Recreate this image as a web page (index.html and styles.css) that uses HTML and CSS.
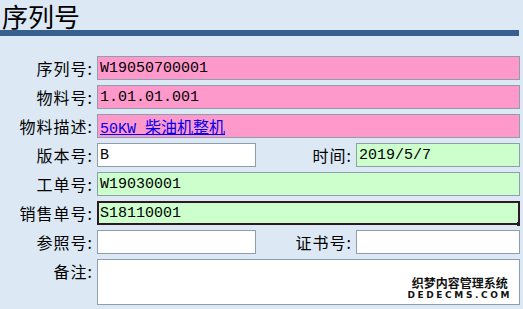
FILE: index.html
```html
<!DOCTYPE html>
<html lang="zh-CN">
<head>
<meta charset="UTF-8">
<title>序列号</title>
<link rel="stylesheet" href="styles.css">
</head>
<body>

<h1 class="title">序列号</h1>

<div class="form">
    <label class="lbl">序列号:</label>
    <div class="field wide pink">W19050700001</div>

    <label class="lbl">物料号:</label>
    <div class="field wide pink">1.01.01.001</div>

    <label class="lbl">物料描述:</label>
    <div class="field wide pink"><a href="#">50KW <span class="cjk">柴油机整机</span></a></div>

    <label class="lbl">版本号:</label>
    <div class="field white">B</div>
    <label class="lbl">时间:</label>
    <div class="field green">2019/5/7</div>

    <label class="lbl">工单号:</label>
    <div class="field wide green">W19030001</div>

    <label class="lbl">销售单号:</label>
    <div class="field wide green focus">S18110001<span class="grip"></span></div>

    <label class="lbl">参照号:</label>
    <div class="field white"></div>
    <label class="lbl">证书号:</label>
    <div class="field white"></div>

    <label class="lbl">备注:</label>
    <div class="field wide white memo">
        <div class="mark">
            <div class="mark-cn">织梦内容管理系统</div>
            <div class="mark-en">DEDECMS.COM</div>
        </div>
    </div>
</div>

</body>
</html>
```

FILE: styles.css
```css
body {
    margin: 0;
    background: #dce9f5;
    font-family: "Noto Sans CJK SC", sans-serif;
    color: #000;
    width: 520px;
}
.title {
    margin: 0;
    padding: 2px 0 0 2px;
    height: 28px;
    font-size: 26px;
    font-weight: normal;
    line-height: 28px;
    border-bottom: 6px solid #37608f;
    width: 517px;
}
.form {
    display: grid;
    grid-template-columns: 97px 159px 100px 164px;
    grid-auto-rows: 24px;
    row-gap: 5px;
    margin-top: 20px;
}
.lbl {
    font-size: 16px;
    line-height: 24px;
    text-align: right;
    padding-right: 4px;
    letter-spacing: 1px;
    white-space: nowrap;
}
.field {
    box-sizing: border-box;
    border: 1px solid #8f9eac;
    padding: 0 2px;
    font-family: "Liberation Mono", "Noto Sans CJK SC", monospace;
    font-size: 15px;
    line-height: 23px;
    position: relative;
}
.wide {
    grid-column: 2 / 5;
}
.pink { background: #ff99cc; }
.green { background: #ccffcc; }
.white { background: #fff; }
.focus {
    border: 2px solid #2e1826;
    line-height: 21px;
    padding-left: 1px;
}
.grip {
    position: absolute;
    right: -3px;
    bottom: -3px;
    width: 4px;
    height: 4px;
    background: #222;
}
.field a {
    color: #0000ee;
    text-decoration: underline;
}
.cjk {
    font-family: "Noto Sans CJK SC", sans-serif;
    font-size: 16px;
}
.memo {
    grid-row: span 2;
    height: 46px;
}
.mark {
    position: absolute;
    right: 7px;
    bottom: 3px;
    text-align: center;
    font-family: "Noto Sans CJK SC", sans-serif;
    font-weight: bold;
    color: #111;
}
.mark-cn {
    font-size: 12px;
    line-height: 15px;
}
.mark-en {
    font-family: "DejaVu Sans", sans-serif;
    font-size: 9px;
    line-height: 11px;
    letter-spacing: 2.6px;
}
```
